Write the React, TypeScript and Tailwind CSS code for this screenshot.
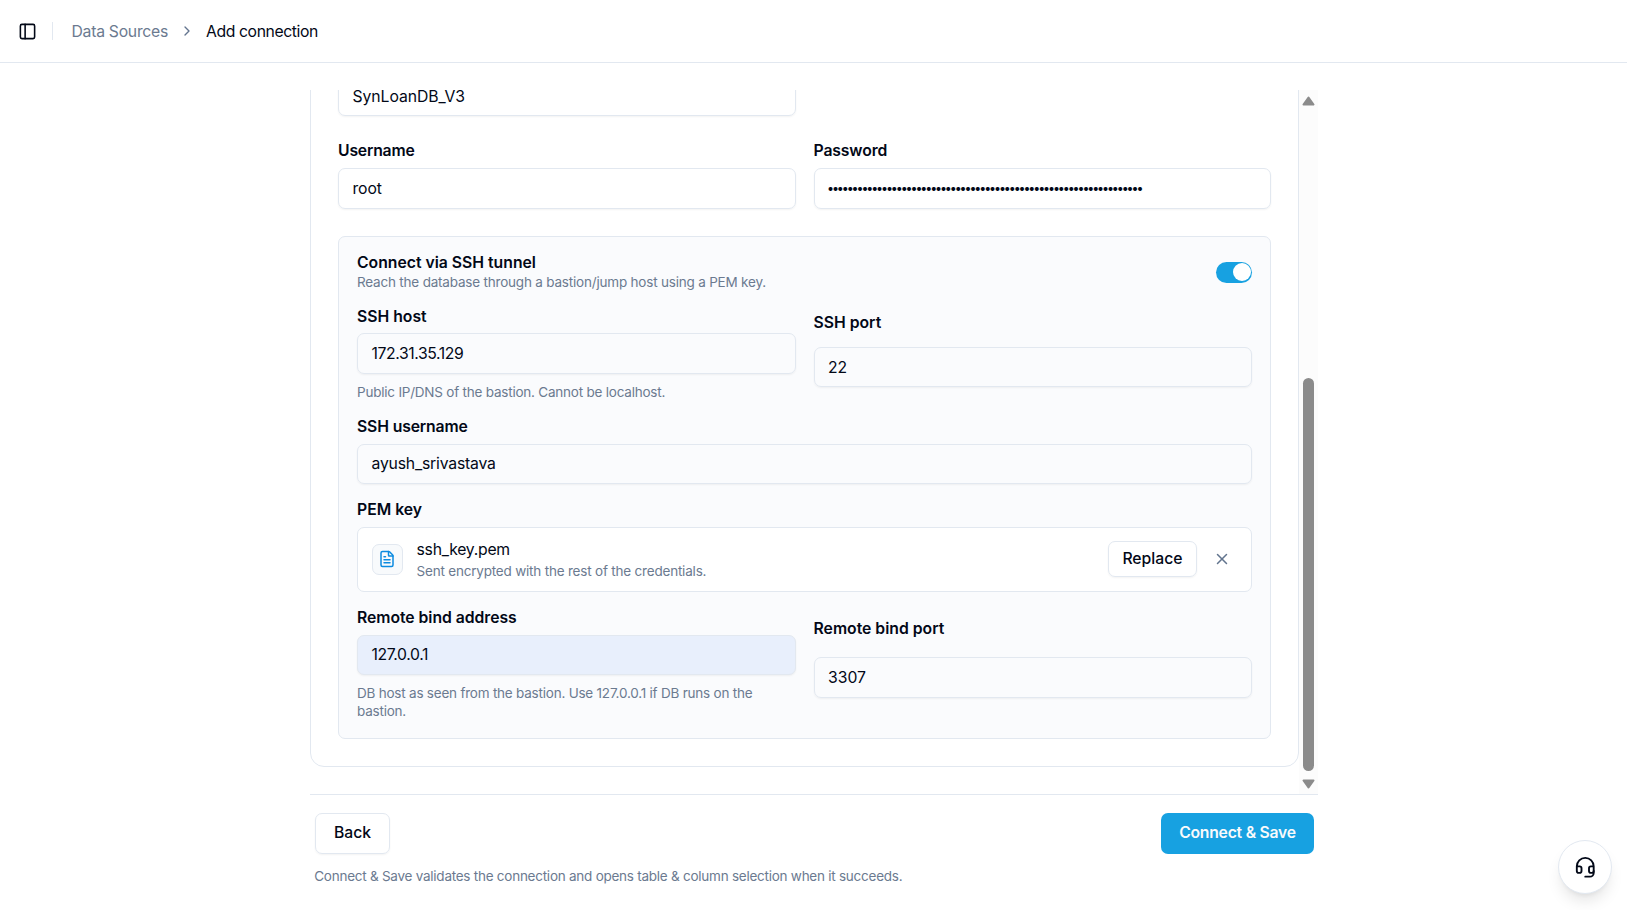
import React from "react";
import { ChevronRight, FileText, Headset, PanelLeft, X } from "lucide-react";
import clsx from "clsx";

type FieldProps = {
  label: string;
  labelClass?: string;
  value: string;
  valueClass?: string;
  hint?: string;
  filled?: boolean;
};

const PASSWORD_LENGTH = 64;

const Label: React.FC<{ children: React.ReactNode; className?: string }> = ({ children, className }) => (
  <div className={clsx("flex items-center text-[15.75px] leading-none font-semibold whitespace-nowrap", className)}>
    {children}
  </div>
);

const Hint: React.FC<{ children: React.ReactNode; className?: string }> = ({ children, className }) => (
  <p className={clsx("text-[13.5px] leading-[18px] text-[#6b7a90]", className)}>{children}</p>
);

const Field: React.FC<FieldProps> = ({ label, labelClass, value, valueClass, hint, filled }) => (
  <div className="grid gap-[9px]">
    <Label className={labelClass}>{label}</Label>
    <div
      className={clsx(
        "flex h-[40.5px] items-center rounded-[7px] border border-slate-200 px-[13.5px] text-[15.75px] leading-none shadow-xs",
        filled && "bg-[#e8effc]"
      )}
    >
      <span className={clsx("whitespace-nowrap", valueClass)}>{value}</span>
    </div>
    {hint && <Hint className="tracking-[-0.22px]">{hint}</Hint>}
  </div>
);

const Header = () => (
  <header className="flex h-[63px] shrink-0 items-center border-b border-slate-200 pl-[17.5px] text-[15.75px]">
    <PanelLeft size={19} />
    <div className="ml-[15.5px] h-[18px] w-px bg-slate-200" />
    <span className="ml-[18.5px] pt-px tracking-[-0.27px] text-[#6b7a90]">Data Sources</span>
    <ChevronRight size={16} className="ml-[10.5px] text-slate-500" />
    <span className="ml-[11.5px] pt-px tracking-[-0.4px]">Add connection</span>
  </header>
);

const Switch = () => (
  <div className="mb-px flex h-[21px] w-9 items-center justify-end rounded-full bg-[#17a1e1] pr-px">
    <div className="size-[18px] rounded-full bg-white" />
  </div>
);

const PemKey = () => (
  <div className="grid gap-[9px]">
    <Label>PEM key</Label>
    <div className="flex h-[64.9px] items-center rounded-[7px] border border-slate-200 bg-white pr-[11.5px] pl-[13.5px]">
      <div className="flex size-[31px] items-center justify-center rounded-[7px] border border-slate-200 bg-slate-50">
        <FileText size={18} className="text-[#0c8be0]" />
      </div>
      <div className="ml-[14px] flex-1">
        <p className="text-[15.75px] leading-[22.5px] tracking-[-0.25px]">ssh_key.pem</p>
        <Hint className="mt-px tracking-[-0.2px]">Sent encrypted with the rest of the credentials.</Hint>
      </div>
      <button className="mb-px flex h-9 w-[89px] items-center justify-center rounded-[7px] border border-slate-200 pl-px text-[15.75px] font-medium shadow-xs">
        Replace
      </button>
      <button className="mb-px ml-[7px] flex size-9 items-center justify-center text-slate-500">
        <X size={18} />
      </button>
    </div>
  </div>
);

const SshTunnel = () => (
  <section className="grid gap-[18px] rounded-[7px] border border-slate-200 bg-[#fafbfd] p-[18px]">
    <div className="flex h-9 items-center justify-between">
      <div className="pt-px">
        <Label>Connect via SSH tunnel</Label>
        <Hint className="mt-[2.5px] tracking-[-0.2px]">
          Reach the database through a bastion/jump host using a PEM key.
        </Hint>
      </div>
      <Switch />
    </div>
    <div className="grid grid-cols-2 gap-[18px]">
      <Field
        label="SSH host"
        value="172.31.35.129"
        valueClass="tracking-[-0.4px]"
        hint="Public IP/DNS of the bastion. Cannot be localhost."
      />
      <Field label="SSH port" value="22" valueClass="pt-px" />
    </div>
    <Field
      label="SSH username"
      labelClass="tracking-[-0.14px]"
      value="ayush_srivastava"
      valueClass="tracking-[-0.19px]"
    />
    <PemKey />
    <div className="grid grid-cols-2 gap-[18px]">
      <Field
        label="Remote bind address"
        labelClass="tracking-[-0.04px]"
        value="127.0.0.1"
        valueClass="tracking-[-0.38px]"
        hint="DB host as seen from the bastion. Use 127.0.0.1 if DB runs on the bastion."
        filled
      />
      <Field label="Remote bind port" value="3307" valueClass="pt-px" />
    </div>
  </section>
);

const Scrollbar = () => (
  <div className="flex w-[19px] shrink-0 flex-col items-center bg-[#fcfcfc] pt-[6px] pb-[5px]">
    <svg width="13" height="10" viewBox="0 0 13 10" className="shrink-0">
      <path d="M6.5 1.5 11.5 8.5H1.5Z" fill="#8b8b8b" stroke="#8b8b8b" strokeWidth="2" strokeLinejoin="round" />
    </svg>
    <div className="mt-[272px] h-[393px] w-[11px] shrink-0 rounded-full bg-[#8b8b8b]" />
    <svg width="13" height="10" viewBox="0 0 13 10" className="mt-2 shrink-0">
      <path d="M6.5 8.5 1.5 1.5H11.5Z" fill="#8b8b8b" stroke="#8b8b8b" strokeWidth="2" strokeLinejoin="round" />
    </svg>
  </div>
);

const App: React.FC = () => {
  return (
    <div className="flex h-[910px] flex-col overflow-hidden bg-white font-['Inter',sans-serif] text-[#020817]">
      <Header />

      <main className="ml-[310px] flex w-[1008px] flex-1 flex-col pt-[27px]">
        {/* Form, scrolled to its end */}
        <div className="flex h-[704px] shrink-0">
          <div className="flex flex-1 flex-col justify-end overflow-hidden pb-[27px]">
            <div className="grid shrink-0 gap-[27px] rounded-[14px] border border-slate-200 p-[27px]">
              <div className="grid grid-cols-2 gap-[18px]">
                <div className="flex h-[40.5px] items-center rounded-[7px] border border-slate-200 px-[13.5px] pt-[2px] text-[15.75px] leading-none tracking-[-0.06px] shadow-xs">
                  SynLoanDB_V3
                </div>
              </div>
              <div className="grid grid-cols-2 gap-[18px]">
                <Field
                  label="Username"
                  labelClass="tracking-[-0.2px]"
                  value="root"
                  valueClass="pt-[1.5px] tracking-[-0.1px]"
                />
                <Field
                  label="Password"
                  labelClass="tracking-[-0.13px]"
                  value={"•".repeat(PASSWORD_LENGTH)}
                  valueClass="-ml-px pt-[1.5px] text-[12.5px] tracking-[-2.12px]"
                />
              </div>
              <SshTunnel />
            </div>
          </div>
          <Scrollbar />
        </div>

        <footer className="border-t border-slate-200 px-[5px] pt-[18px]">
          <div className="flex items-center justify-between text-[15.75px]">
            <button className="h-[41px] w-[75px] rounded-[7px] border border-slate-200 pb-0.5 font-medium shadow-xs">
              Back
            </button>
            <button className="mr-[-1px] h-[41px] w-[153px] rounded-[7px] bg-[#17a1e1] pb-0.5 font-semibold tracking-[-0.25px] text-slate-50">
              Connect &amp; Save
            </button>
          </div>
          <Hint className="mt-[12.5px] ml-[-0.75px] tracking-[-0.25px]">
            Connect &amp; Save validates the connection and opens table &amp; column selection when it succeeds.
          </Hint>
        </footer>
      </main>

      <button className="fixed right-[15px] bottom-4 flex size-[54px] items-center justify-center rounded-full border border-slate-200 bg-white shadow-lg">
        <Headset size={22.5} />
      </button>
    </div>
  );
};

export default App;
